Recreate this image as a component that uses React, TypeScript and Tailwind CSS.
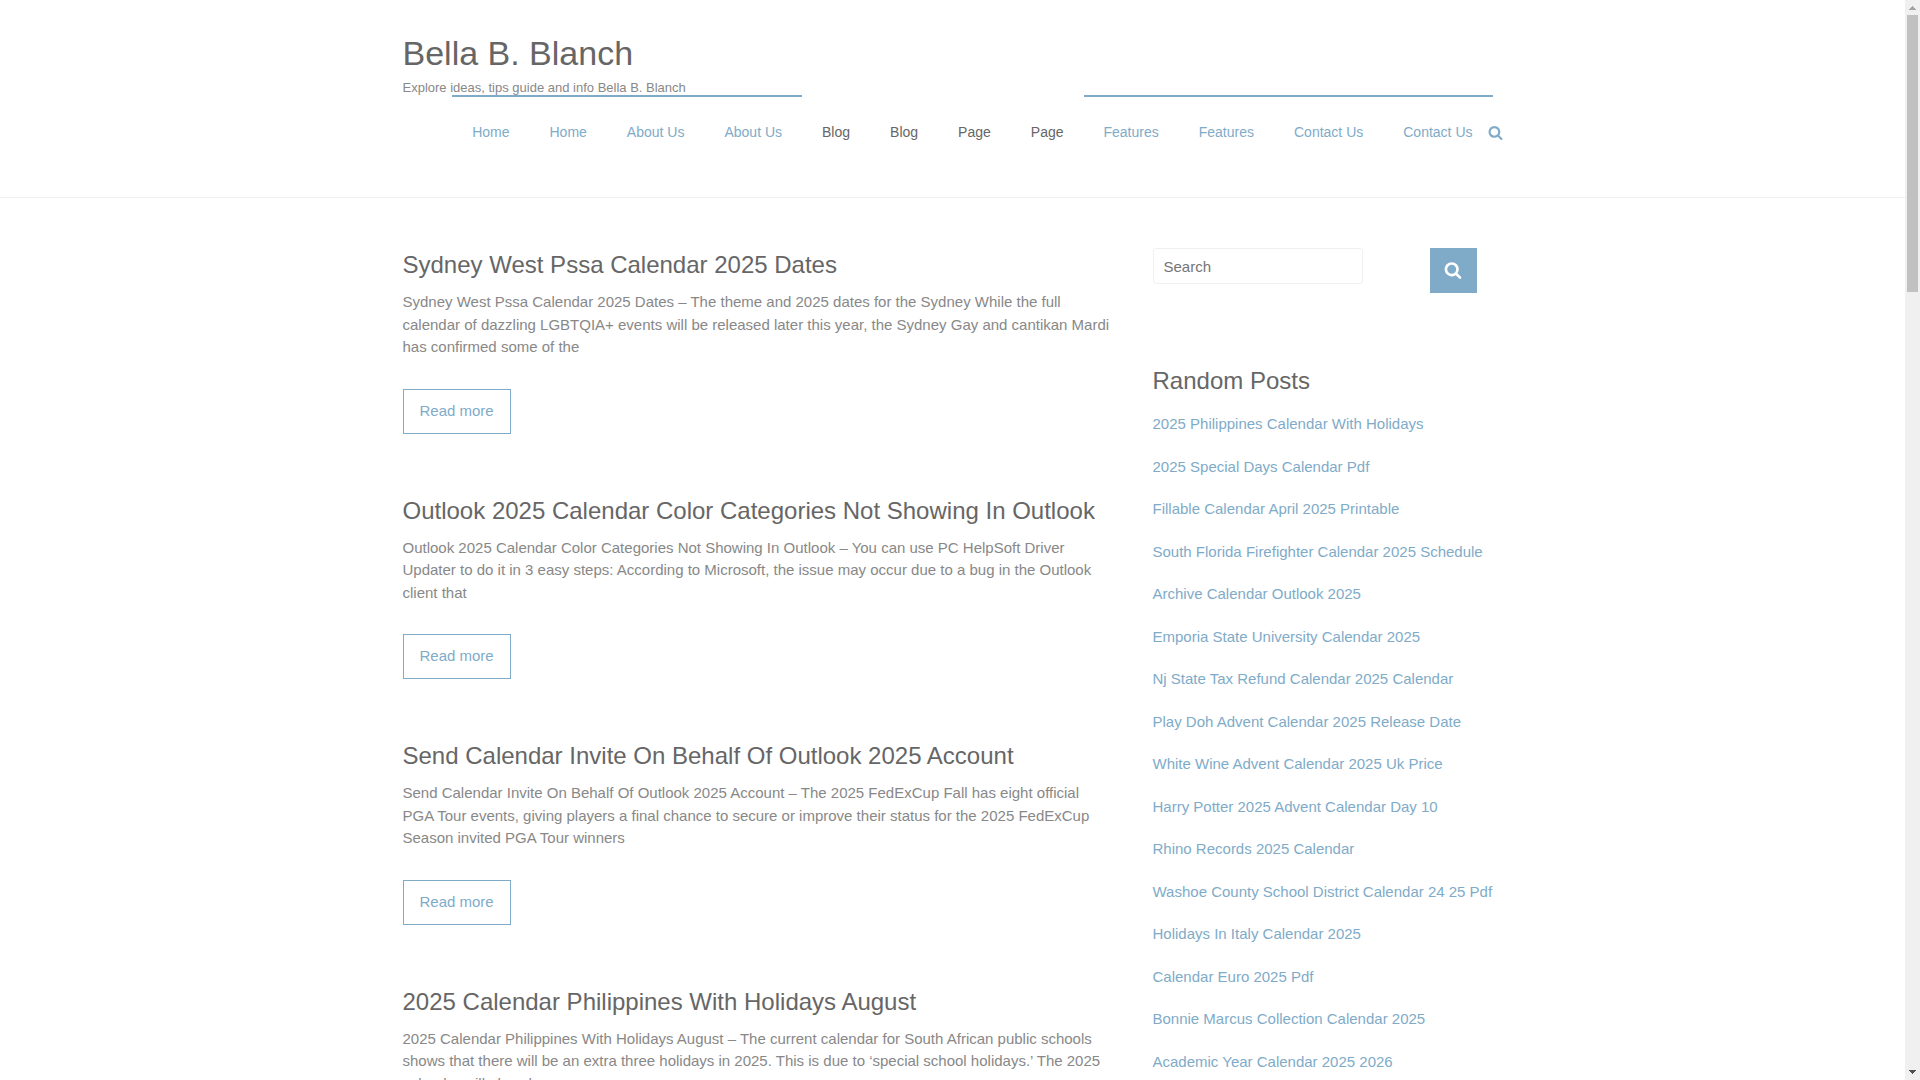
import React from 'react';

const menu = [
    { label: 'Home', active: true },
    { label: 'Home', active: true },
    { label: 'About Us', active: true },
    { label: 'About Us', active: true },
    { label: 'Blog', active: false },
    { label: 'Blog', active: false },
    { label: 'Page', active: false },
    { label: 'Page', active: false },
    { label: 'Features', active: true },
    { label: 'Features', active: true },
    { label: 'Contact Us', active: true },
    { label: 'Contact Us', active: true },
];

const posts = [
    {
        title: 'Sydney West Pssa Calendar 2025 Dates',
        text: 'Sydney West Pssa Calendar 2025 Dates – The theme and 2025 dates for the Sydney While the full calendar of dazzling LGBTQIA+ events will be released later this year, the Sydney Gay and cantikan Mardi has confirmed some of the',
    },
    {
        title: 'Outlook 2025 Calendar Color Categories Not Showing In Outlook',
        text: 'Outlook 2025 Calendar Color Categories Not Showing In Outlook – You can use PC HelpSoft Driver Updater to do it in 3 easy steps: According to Microsoft, the issue may occur due to a bug in the Outlook client that',
    },
    {
        title: 'Send Calendar Invite On Behalf Of Outlook 2025 Account',
        text: 'Send Calendar Invite On Behalf Of Outlook 2025 Account – The 2025 FedExCup Fall has eight official PGA Tour events, giving players a final chance to secure or improve their status for the 2025 FedExCup Season invited PGA Tour winners',
    },
    {
        title: '2025 Calendar Philippines With Holidays August',
        text: '2025 Calendar Philippines With Holidays August – The current calendar for South African public schools shows that there will be an extra three holidays in 2025. This is due to ‘special school holidays.’ The 2025 calendar will also change',
    },
];

const randomPosts = [
    '2025 Philippines Calendar With Holidays',
    '2025 Special Days Calendar Pdf',
    'Fillable Calendar April 2025 Printable',
    'South Florida Firefighter Calendar 2025 Schedule',
    'Archive Calendar Outlook 2025',
    'Emporia State University Calendar 2025',
    'Nj State Tax Refund Calendar 2025 Calendar',
    'Play Doh Advent Calendar 2025 Release Date',
    'White Wine Advent Calendar 2025 Uk Price',
    'Harry Potter 2025 Advent Calendar Day 10',
    'Rhino Records 2025 Calendar',
    'Washoe County School District Calendar 24 25 Pdf',
    'Holidays In Italy Calendar 2025',
    'Calendar Euro 2025 Pdf',
    'Bonnie Marcus Collection Calendar 2025',
    'Academic Year Calendar 2025 2026',
];

const SearchIcon: React.FC<{ className: string }> = ({ className }) => (
    <svg viewBox="0 0 1792 1792" fill="currentColor" className={className} aria-hidden="true">
        <path d="M1216 832q0-185-131.5-316.5t-316.5-131.5-316.5 131.5-131.5 316.5 131.5 316.5 316.5 131.5 316.5-131.5 131.5-316.5zm512 832q0 52-38 90t-90 38q-54 0-90-38l-343-342q-179 124-399 124-143 0-273.5-55.5t-225-150-150-225-55.5-273.5 55.5-273.5 150-225 225-150 273.5-55.5 273.5 55.5 225 150 150 225 55.5 273.5q0 220-124 399l343 343q37 37 37 90z" />
    </svg>
);

const Header: React.FC = () => (
    <header className="border-b border-[#f0f0f0] pt-8 pb-[53px]">
        <div className="max-w-[1100px] mx-auto">
            <h1 className="text-[34px] leading-[42px] text-[#666666]">
                <a href="#">Bella B. Blanch</a>
            </h1>
            <p className="mt-1 text-[13px] leading-5">Explore ideas, tips guide and info Bella B. Blanch</p>
            <nav className="relative flex justify-end pr-[10px] -mt-[3px]">
                <ul className="flex text-sm leading-6">
                    {menu.map((item, i) => (
                        <li key={i}>
                            <a
                                href="#"
                                className={
                                    item.active
                                        ? 'block border-t-2 border-[#80abc8] px-5 pt-[23px] text-[#80abc8]'
                                        : 'block border-t-2 border-transparent px-5 pt-[23px] text-[#666666]'
                                }
                            >
                                {item.label}
                            </a>
                        </li>
                    ))}
                </ul>
                <button type="button" aria-label="Open search" className="absolute right-0 bottom-1 text-[#80abc8]">
                    <SearchIcon className="block size-[15px]" />
                </button>
            </nav>
        </div>
    </header>
);

const Posts: React.FC = () => (
    <main className="flex-1 max-w-[710px] space-y-[60px]">
        {posts.map((post) => (
            <article key={post.title}>
                <h2 className="text-2xl leading-[34px] text-[#666666]">
                    <a href="#">{post.title}</a>
                </h2>
                <p className="mt-[9px] mb-[30px]">{post.text}</p>
                <a href="#" className="block h-[45px] w-fit border border-[#80abc8] px-4 py-[10px] text-[#80abc8]">
                    Read more
                </a>
            </article>
        ))}
    </main>
);

const Sidebar: React.FC = () => (
    <aside className="w-[350px] shrink-0">
        <form className="flex items-start" onSubmit={(e) => e.preventDefault()}>
            <input
                type="text"
                aria-label="Search"
                placeholder="Search"
                className="h-9 w-[210px] rounded-[3px] border border-[#f0f0f0] px-[10px] placeholder:text-[#757575] outline-none"
            />
            <button
                type="submit"
                aria-label="Submit search"
                className="ml-[67px] flex h-[45px] w-[47px] items-center justify-center bg-[#80abc8] pb-[2px] text-white"
            >
                <SearchIcon className="size-[18px]" />
            </button>
        </form>
        <h3 className="mt-[71px] text-2xl leading-[34px] text-[#666666]">Random Posts</h3>
        <ul className="mt-[15px] space-y-5">
            {randomPosts.map((title) => (
                <li key={title}>
                    <a href="#" className="text-[#80abc8]">{title}</a>
                </li>
            ))}
        </ul>
    </aside>
);

const Scrollbar: React.FC = () => (
    <div className="flex w-[15px] shrink-0 flex-col items-center bg-[#f0f0f0]" aria-hidden="true">
        <svg viewBox="0 0 15 15" className="size-[15px] shrink-0" shapeRendering="crispEdges">
            <path d="M7 6h1v1h1v1h1v1h1v1H4V9h1V8h1V7h1z" fill="#a3a3a3" />
        </svg>
        <div className="h-[277px] w-[11px] bg-[#c1c1c1]"></div>
        <svg viewBox="0 0 15 15" className="mt-auto size-[15px] shrink-0" shapeRendering="crispEdges">
            <path d="M4 5h7v1h-1v1H9v1H8v1H7V8H6V7H5V6H4z" fill="#505050" />
        </svg>
    </div>
);

const App: React.FC = () => {
    return (
        <div className="flex h-screen overflow-hidden bg-white font-['Liberation_Sans',Arial,sans-serif] text-[15px] leading-normal text-[#888888]">
            <div className="flex-1 overflow-hidden">
                <Header />
                <div className="max-w-[1100px] mx-auto mt-[50px] flex justify-between">
                    <Posts />
                    <Sidebar />
                </div>
            </div>
            <Scrollbar />
        </div>
    );
};

export default App;
